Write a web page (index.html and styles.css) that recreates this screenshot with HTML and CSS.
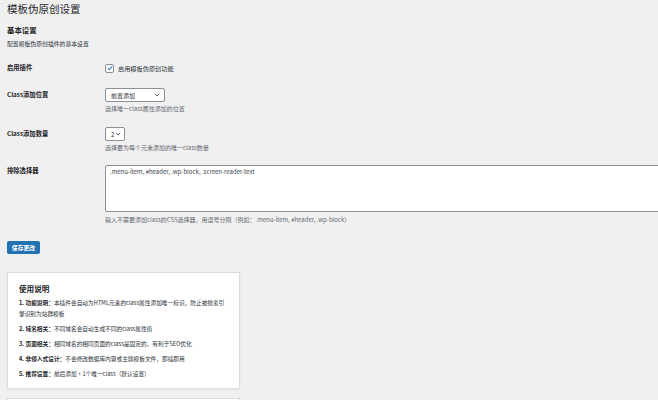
FILE: index.html
```html
<!DOCTYPE html>
<html lang="zh-CN">
<head>
  <meta charset="utf-8">
  <title>模板伪原创设置</title>
  <link rel="stylesheet" href="styles.css">
</head>
<body>
  <div class="wrap">
    <h1 class="title">模板伪原创设置</h1>

    <h2 class="section">基本设置</h2>
    <p class="intro">配置模板伪原创插件的基本设置</p>

    <form>
      <div class="row row-check">
        <label class="th">启用插件</label>
        <div class="td">
          <span class="check">
            <span class="box">
              <svg width="8" height="8" viewBox="0 0 8 8"><path d="M1.8 4.1l1.5 1.5L6.3 2.4" fill="none" stroke="#3582c4" stroke-width="1.1"/></svg>
            </span>
            启用模板伪原创功能
          </span>
        </div>
      </div>

      <div class="row row-pos">
        <label class="th">Class添加位置</label>
        <div class="td">
          <span class="select sel-wide">前置添加
            <svg class="arrow" width="6" height="4" viewBox="0 0 6 4"><path d="M0.8 0.8l2.2 2.2 2.2-2.2" fill="none" stroke="#50575e" stroke-width="0.9"/></svg>
          </span>
          <p class="desc">选择唯一class属性添加的位置</p>
        </div>
      </div>

      <div class="row row-num">
        <label class="th">Class添加数量</label>
        <div class="td">
          <span class="select sel-small">2
            <svg class="arrow" width="6" height="4" viewBox="0 0 6 4"><path d="M0.8 0.8l2.2 2.2 2.2-2.2" fill="none" stroke="#50575e" stroke-width="0.9"/></svg>
          </span>
          <p class="desc">选择要为每个元素添加的唯一class数量</p>
        </div>
      </div>

      <div class="row row-exclude">
        <label class="th th-top">排除选择器</label>
        <div class="td">
          <div class="textarea">.menu-item, #header, .wp-block, .screen-reader-text</div>
          <p class="desc desc-area">输入不需要添加class的CSS选择器，用逗号分隔（例如：.menu-item, #header, .wp-block）</p>
        </div>
      </div>

      <button type="button" class="btn">保存更改</button>
    </form>

    <div class="card">
      <h3 class="card-title">使用说明</h3>
      <p class="item"><b>1. 功能说明：</b>本插件会自动为HTML元素的class属性添加唯一标识，防止被搜索引擎识别为站群模板</p>
      <p class="item"><b>2. 域名相关：</b>不同域名会自动生成不同的class属性值</p>
      <p class="item"><b>3. 页面相关：</b>相同域名的相同页面的class是固定的，有利于SEO优化</p>
      <p class="item"><b>4. 非侵入式设计：</b>不会修改数据库内容或主题模板文件，即插即用</p>
      <p class="item"><b>5. 推荐设置：</b>前后添加 + 1个唯一class（默认设置）</p>
    </div>
    <div class="card card-next"></div>
  </div>
</body>
</html>
```

FILE: styles.css
```css
html { overflow: hidden; }
body { margin: 0; background: #f0f0f1; color: #1d2327; font-family: "Noto Sans CJK SC", "Noto Sans", sans-serif; }
.wrap { padding: 0 7px; }

.title { font-size: 10.5px; font-weight: 400; line-height: 14px; margin: 2px 0 0; }
.section { font-size: 7.4px; font-weight: 700; line-height: 10px; margin: 9px 0 0; }
.intro { font-size: 5.85px; line-height: 8px; margin: 5px 0 0; color: #2c3338; }

.row { display: grid; grid-template-columns: 98px 1fr; }
.th { font-size: 6.3px; font-weight: 700; line-height: 14px; }
.th-top { line-height: 12px; }
.td { font-size: 6px; }

.row-check { margin-top: 13px; }
.row-pos { margin-top: 13px; }
.row-num { margin-top: 13px; }
.row-exclude { margin-top: 12px; }

.check { display: flex; align-items: center; height: 14px; font-size: 6.2px; color: #2c3338; }
.box { width: 7px; height: 7px; border: 1px solid #8c8f94; border-radius: 2px; background: #fff; margin-right: 4px; display: flex; }
.box svg { margin: -0.5px; }

.select { display: flex; align-items: center; justify-content: space-between; box-sizing: border-box; height: 14px; padding: 0 4px 0 5px; background: #fff; border: 1px solid #8c8f94; border-radius: 2px; color: #2c3338; font-size: 6px; }
.sel-wide { width: 60px; }
.sel-small { width: 20px; padding-right: 3px; }

.desc { margin: 2px 0 0; line-height: 10px; color: #646970; font-size: 6px; }
.desc-area { margin-top: 3px; }

.textarea { box-sizing: border-box; width: 580px; height: 47px; background: #fff; border: 1px solid #8c8f94; border-radius: 2px; padding: 2px 4px; line-height: 8px; color: #3c434a; font-size: 6px; }

.btn { display: block; margin-top: 16px; width: 33px; height: 13px; padding: 0; border: 1px solid #2271b1; border-radius: 1.5px; background: #2271b1; color: #fff; font-family: inherit; font-size: 5.85px; font-weight: 700; line-height: 11px; }

.card { box-sizing: border-box; width: 233px; margin-top: 18px; padding: 10px 11px 9px; background: #fff; border: 1px solid #dcdcde; box-shadow: 0 1px 2px rgba(0,0,0,.06); }
.card-title { font-size: 7.6px; font-weight: 700; line-height: 12px; margin: 0 0 1.5px; }
.item { font-size: 5.7px; line-height: 11px; margin: 0 0 4px; color: #2c3338; }
.item:last-child { margin-bottom: 0; }
.item b { color: #1d2327; }
.card-next { margin-top: 9px; height: 20px; }
```
